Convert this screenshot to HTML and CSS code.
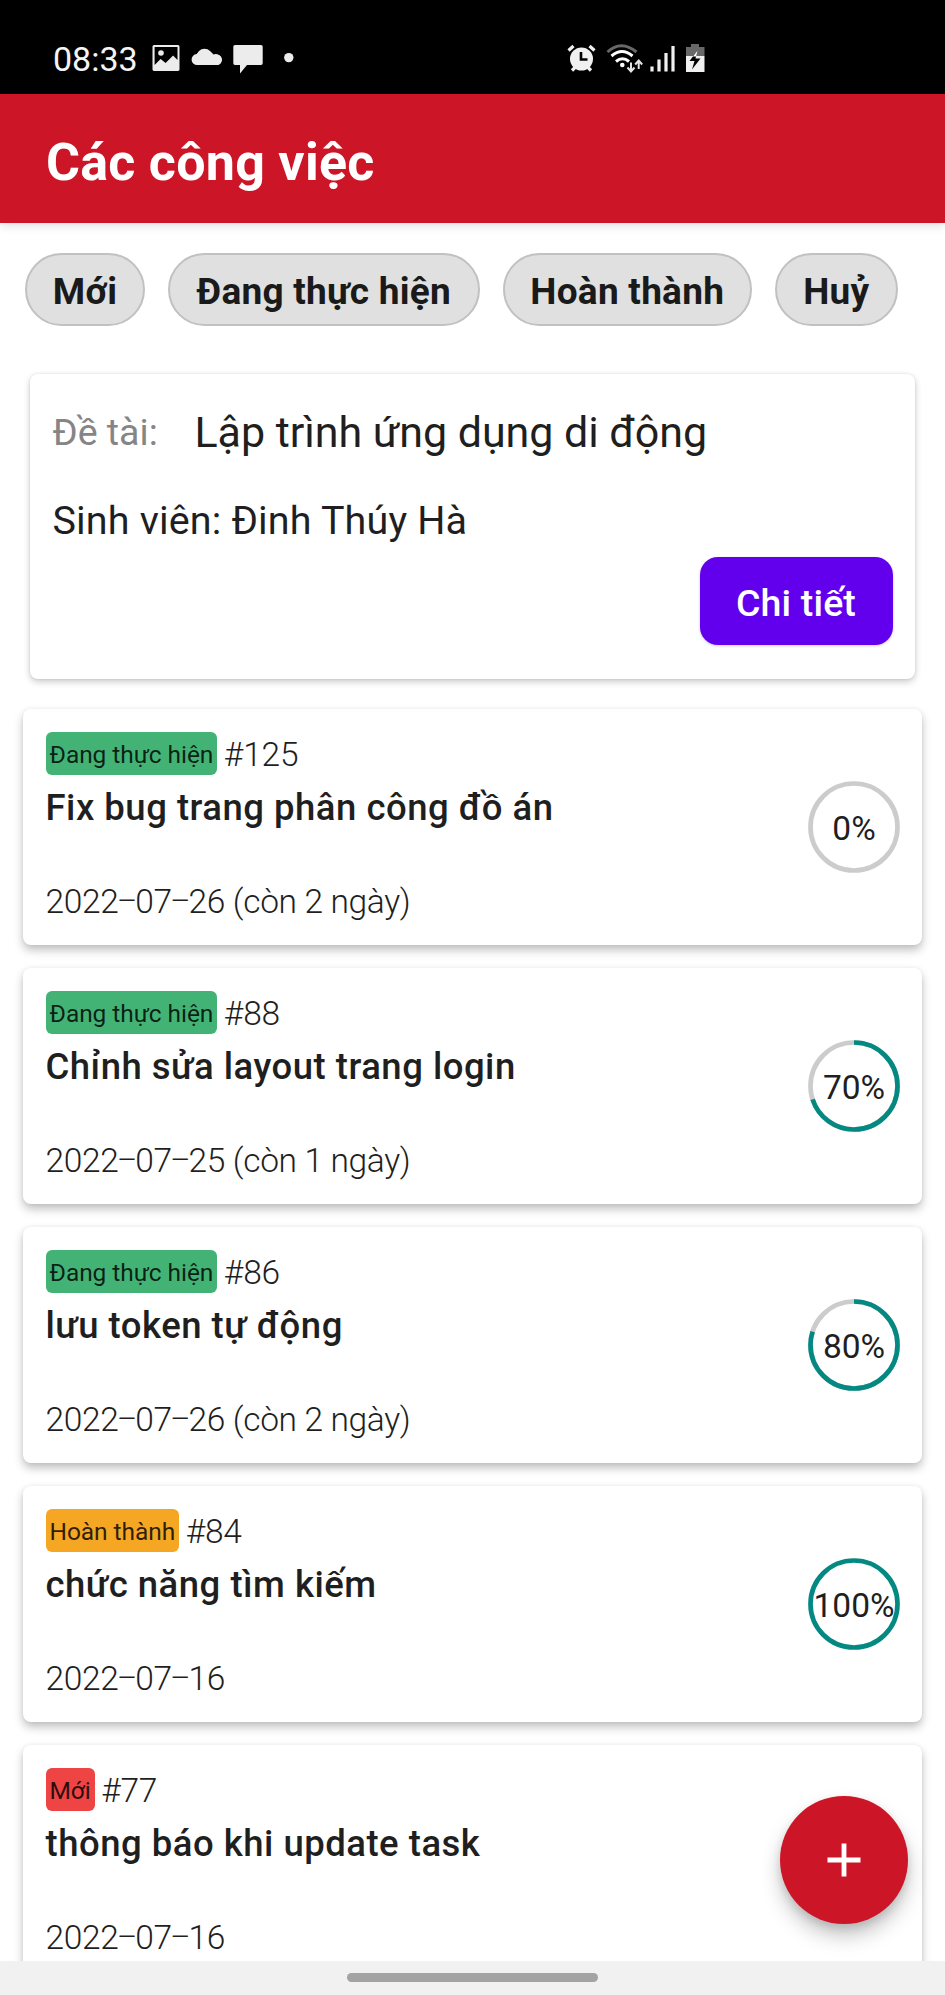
FILE: index.html
```html
<!DOCTYPE html>
<html lang="vi">
<head>
<meta charset="utf-8">
<title>Các công việc</title>
<link rel="stylesheet" href="styles.css">
</head>
<body>
<div class="screen">
  <div class="status">
    <span class="clock">08:33</span>
    <svg class="status-left" width="142" height="32" viewBox="0 0 142 32" fill="#ececec">
      <path fill-rule="evenodd" d="M2 3h24a1.600 1.600 0 0 1 1.500 1.500v23a1.600 1.600 0 0 1-1.500 1.500H2a1.600 1.600 0 0 1-1.500-1.500v-23A1.600 1.600 0 0 1 2 3zM2.600 5v18l6-6 5 4 7.500-7.500 4.400 4.500V5z"/>
      <circle cx="9" cy="11" r="2.800"/>
      <path d="M45.500 23a5.500 5.500 0 0 1-.8-11A10.500 10.500 0 0 1 61.500 12.500a5.700 5.700 0 0 1 4.500 10.500z"/>
      <circle cx="64.800" cy="17.800" r="5.200"/>
      <circle cx="52.500" cy="14.500" r="7.800"/>
      <path d="M83 3h26a1.700 1.700 0 0 1 1.700 1.700v16.600A1.700 1.700 0 0 1 109 23H95l-7 8.500V23h-5a1.700 1.700 0 0 1-1.700-1.700V4.700A1.700 1.700 0 0 1 83 3z"/>
      <circle cx="136.800" cy="15.600" r="4.700"/>
    </svg>
    <svg class="status-right" width="140" height="32" viewBox="0 0 140 32" fill="none">
      <circle cx="14.500" cy="17" r="11.500" fill="#f0f0f0"/>
      <path d="M5 28.500l4-4M24 28.500l-4-4M1.500 8.500l5-4.500M27.500 8.500L22.500 4" stroke="#f0f0f0" stroke-width="3.200"/>
      <path d="M14 10v7.500h6.500" stroke="#000" stroke-width="2.600"/>
      <path d="M40.500 10q13.500-12.500 29 0" stroke="#686868" stroke-width="3"/>
      <path d="M44.500 14q10.500-9 21 0M49 19.500q6.500-5.500 13 0" stroke="#fff" stroke-width="3"/>
      <circle cx="55.300" cy="23" r="2.300" fill="#fff"/>
      <path d="M64 20.500v8M60.500 25.500l3.500 4 3.500-4M71.700 27v-8M68.200 22.500l3.500-4 3.500 4" stroke="#e4e4e4" stroke-width="2"/>
      <path d="M85 24.500v5M92 17.500v12M99 11v18.500M106 4v25.500" stroke="#f0f0f0" stroke-width="3.200"/>
      <path d="M124 2h8v3h5.500v9H119V5h5z" fill="#686868"/>
      <path d="M119 14h18.500v16H119z" fill="#f0f0f0"/>
      <path d="M130.500 8.500l-8 10.500h5l-2.500 8.500 8.500-11h-5z" fill="#000"/>
      <path d="M130.500 8.500l-4.500 6h3.200z" fill="#fff"/>
    </svg>
  </div>
  <header class="appbar"><h1>Các công việc</h1></header>
  <main class="content">
    <nav class="chips">
      <span class="chip chip-new">Mới</span>
      <span class="chip chip-doing">Đang thực hiện</span>
      <span class="chip chip-done">Hoàn thành</span>
      <span class="chip chip-cancel">Huỷ</span>
    </nav>
    <section class="topic">
      <div class="topic-row"><span class="topic-label">Đề tài:</span><span class="topic-name">Lập trình ứng dụng di động</span></div>
      <div class="student">Sinh viên: Đinh Thúy Hà</div>
      <button class="detail">Chi tiết</button>
    </section>
    <section class="tasks">
      <article class="task">
        <div class="info">
          <div class="tagline"><span class="badge doing">Đang thực hiện</span><span class="num">#125</span></div>
          <h2>Fix bug trang phân công đồ án</h2>
          <div class="date">2022<i>–</i>07<i>–</i>26 (còn 2 ngày)</div>
        </div>
        <div class="ring"><svg viewBox="0 0 92 92"><circle class="track" cx="46" cy="46" r="43.500"/></svg><span>0%</span></div>
      </article>
      <article class="task">
        <div class="info">
          <div class="tagline"><span class="badge doing">Đang thực hiện</span><span class="num">#88</span></div>
          <h2>Chỉnh sửa layout trang login</h2>
          <div class="date">2022<i>–</i>07<i>–</i>25 (còn 1 ngày)</div>
        </div>
        <div class="ring"><svg viewBox="0 0 92 92"><circle class="track" cx="46" cy="46" r="43.500"/><circle class="bar" pathLength="100" stroke-dasharray="70 100" cx="46" cy="46" r="43.500"/></svg><span>70%</span></div>
      </article>
      <article class="task">
        <div class="info">
          <div class="tagline"><span class="badge doing">Đang thực hiện</span><span class="num">#86</span></div>
          <h2>lưu token tự động</h2>
          <div class="date">2022<i>–</i>07<i>–</i>26 (còn 2 ngày)</div>
        </div>
        <div class="ring"><svg viewBox="0 0 92 92"><circle class="track" cx="46" cy="46" r="43.500"/><circle class="bar" pathLength="100" stroke-dasharray="80 100" cx="46" cy="46" r="43.500"/></svg><span>80%</span></div>
      </article>
      <article class="task">
        <div class="info">
          <div class="tagline"><span class="badge done">Hoàn thành</span><span class="num">#84</span></div>
          <h2>chức năng tìm kiếm</h2>
          <div class="date">2022<i>–</i>07<i>–</i>16</div>
        </div>
        <div class="ring"><svg viewBox="0 0 92 92"><circle class="bar" cx="46" cy="46" r="43.500"/></svg><span>100%</span></div>
      </article>
      <article class="task">
        <div class="info">
          <div class="tagline"><span class="badge new">Mới</span><span class="num">#77</span></div>
          <h2>thông báo khi update task</h2>
          <div class="date">2022<i>–</i>07<i>–</i>16</div>
        </div>
      </article>
    </section>
  </main>
  <button class="fab" aria-label="Thêm"><svg width="34" height="34" viewBox="0 0 34 34"><path d="M17 .5v33M.5 17h33" stroke="#fff" stroke-width="4.800"/></svg></button>
  <footer class="navbar"><span class="handle"></span></footer>
</div>
</body>
</html>
```

FILE: styles.css
```css
* { box-sizing: border-box; }
body { margin: 0; font-family: Roboto, "Noto Sans", sans-serif; color: #1f1f1f; background: #fff; }
h1, h2 { margin: 0; }
button { border: 0; padding: 0; font-family: inherit; }
.screen { position: relative; width: 945px; height: 1995px; overflow: hidden; display: flex; flex-direction: column; }

.status { flex: none; height: 94px; background: #000; display: flex; align-items: flex-start; padding: 42px 0 0 53px; }
.clock { color: #f4f4f4; font-size: 34px; line-height: 34px; width: 99px; white-space: nowrap; }
.status-left { flex: none; }
.status-right { flex: none; margin-left: 273px; }

.appbar { flex: none; position: relative; height: 129px; background: #cc1627; display: flex; align-items: center; padding: 8px 0 0 46px; box-shadow: 0 2px 10px rgba(0,0,0,.15); }
.appbar h1 { color: #fff; font-size: 52px; font-weight: 700; letter-spacing: .25px; white-space: nowrap; }

.content { flex: 1; min-height: 0; overflow: hidden; display: flex; flex-direction: column; padding-top: 30px; }
.chips { flex: none; display: flex; gap: 23px; padding-left: 25px; }
.chip { flex: none; height: 73px; border: 2px solid #c1c1c1; border-radius: 37px; background: #e0e0e0; color: #1a1a1a; font-size: 37px; font-weight: 700; letter-spacing: .25px; display: flex; align-items: center; justify-content: center; padding-top: 4px; white-space: nowrap; }
.chip-new { width: 120px; }
.chip-doing { width: 311.500px; }
.chip-done { width: 249.500px; }
.chip-cancel { width: 122.500px; }

.topic { flex: none; margin: 48px 30px 0 29.500px; height: 305px; padding: 33px 22.500px 0 23px; border-radius: 8px; background: #fff; box-shadow: 0 3px 7px rgba(0,0,0,.2), 0 0 3px rgba(0,0,0,.1); display: flex; flex-direction: column; }
.topic-row { display: flex; height: 50px; line-height: 50px; white-space: nowrap; }
.topic-label { width: 142px; font-size: 37.500px; color: #858585; }
.topic-name { font-size: 43px; letter-spacing: -.05px; }
.student { margin-top: 39px; height: 50px; line-height: 50px; font-size: 39.500px; letter-spacing: .15px; white-space: nowrap; }
.detail { align-self: flex-end; margin-top: 11px; width: 193px; height: 87.500px; padding-top: 4px; border-radius: 18px; background: #6200ee; color: #fff; font-size: 37.500px; letter-spacing: .15px; font-weight: 500; box-shadow: 0 1px 3px rgba(0,0,0,.2); }

.tasks { flex: none; display: flex; flex-direction: column; gap: 23px; padding: 30px 23px 0 22.500px; }
.task { flex: none; height: 236px; border-radius: 8px; background: #fff; box-shadow: 0 5px 10px rgba(0,0,0,.25), 0 0 4px rgba(0,0,0,.05); display: flex; justify-content: space-between; padding: 23px 22px 0 23px; }
.tagline { display: flex; gap: 6.500px; height: 43px; }
.badge { padding: 0 4px; border-radius: 6px; font-size: 24.500px; line-height: 46px; letter-spacing: -.06px; color: rgba(0,0,0,.82); white-space: nowrap; }
.doing { background: #43b375; }
.done { background: #f5a623; }
.new { background: #ee4444; }
.num { font-size: 33.500px; font-weight: 300; line-height: 46px; letter-spacing: -.2px; }
.task h2 { margin-top: 8px; font-size: 36.500px; font-weight: 500; line-height: 50px; letter-spacing: .5px; white-space: nowrap; }
.date { margin-top: 49px; font-size: 33.500px; font-weight: 300; line-height: 40px; letter-spacing: -.35px; white-space: nowrap; }
.date i { font-style: normal; font-size: 31px; line-height: 1; vertical-align: 1px; margin: 0 -1.500px; }
.ring { margin-top: 49px; width: 92px; height: 92px; display: grid; place-items: center; }
.ring svg, .ring span { grid-area: 1 / 1; }
.ring svg { width: 92px; height: 92px; transform: rotate(-90deg); fill: none; stroke-width: 4.700px; }
.ring span { font-size: 33.500px; padding-top: 2px; }
.track { stroke: #ccc; }
.bar { stroke: #048982; }

.fab { position: absolute; left: 779.500px; top: 1795.500px; width: 128.500px; height: 128.500px; border-radius: 50%; background: #cc1627; display: flex; align-items: center; justify-content: center; box-shadow: 0 12px 20px rgba(0,0,0,.22), 0 4px 8px rgba(0,0,0,.12); }
.navbar { flex: none; position: relative; height: 34px; background: #f1f1f1; display: flex; justify-content: center; padding-top: 12px; }
.handle { width: 251px; height: 9px; border-radius: 5px; background: #a3a3a3; }
```
